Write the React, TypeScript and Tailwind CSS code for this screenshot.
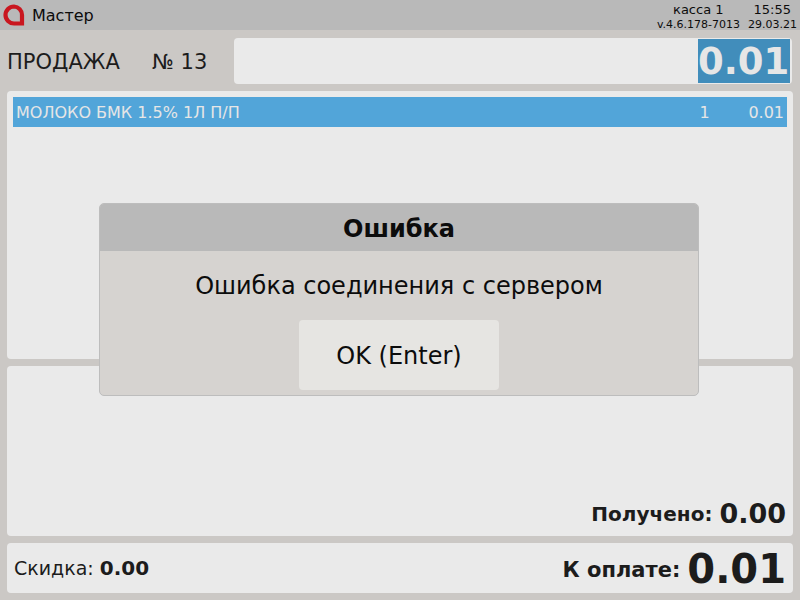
const FONT = "font-['DejaVu_Sans',sans-serif]"

function Logo() {
  return (
    <svg width="22" height="22" viewBox="0 0 22 22" className="shrink-0">
      <path
        d="M11 2.5 A8.5 8.5 0 0 0 11 19.5 H19 V11 A8.5 8.5 0 0 0 11 2.5 Z"
        fill="none"
        stroke="#c9161f"
        strokeWidth="4.2"
      />
    </svg>
  )
}

export default function App() {
  return (
    <div className={`${FONT} relative w-[800px] h-[600px] overflow-hidden bg-[#cbc8c5] text-[#1c1c1c]`}>
      {/* Top bar */}
      <div className="h-[30px] bg-[#b9b9b9] flex items-center justify-between pl-[3px] pr-[3px]">
        <div className="flex items-center gap-[7px]">
          <Logo />
          <span className="text-[16px] leading-[18px] pt-[2px] text-[#0c0c0c]">Мастер</span>
        </div>
        <div className="flex flex-col items-end text-[#0c0c0c] pt-[2px]">
          <div className="flex text-[13px] leading-[16px] pr-[6px]">
            <span className="ml-[1px]">касса 1</span>
            <span className="ml-[30px]">15:55</span>
          </div>
          <div className="flex text-[11px] leading-[12px] pt-[1px]">
            <span>v.4.6.178-7013</span>
            <span className="ml-[8px]">29.03.21</span>
          </div>
        </div>
      </div>

      {/* Sale header */}
      <div className="flex items-center h-[46px] mt-[8px] pl-[7px] pr-[8px]">
        <span className="w-[145px] text-[21px] leading-[24px] pt-[2px]">ПРОДАЖА</span>
        <span className="w-[82px] text-[21px] leading-[24px] pt-[2px]">№ 13</span>
        <div className="flex-1 h-full bg-[#eaeaea] rounded-[4px] flex justify-end items-center pr-[2px]">
          <div className="w-[92px] h-[44px] bg-[#418dbb] text-[#e6e6e6] text-[37px] font-bold leading-[45px] text-right pr-[1px]">
            0.01
          </div>
        </div>
      </div>

      {/* Items */}
      <div className="h-[268px] mt-[7px] mx-[7px] bg-[#eaeaea] rounded-[4px] p-[6px]">
        <div className="h-[30px] bg-[#52a5d9] text-[#e6e6e6] text-[16px] leading-[31px] flex pl-[3px] pr-[3px]">
          <span className="flex-1">МОЛОКО БМК 1.5% 1Л П/П</span>
          <span className="w-[10px] mr-[39px]">1</span>
          <span>0.01</span>
        </div>
      </div>

      {/* Received */}
      <div className="h-[170px] mt-[7px] mx-[7px] bg-[#eaeaea] rounded-[4px] flex items-end justify-end pr-[7px] pb-[5px]">
        <span className="text-[20px] font-bold leading-[34px] mr-[7px]">Получено:</span>
        <span className="text-[27px] font-bold leading-[34px]">0.00</span>
      </div>

      {/* Total */}
      <div className="h-[50px] mt-[7px] mx-[7px] bg-[#eaeaea] rounded-[4px] flex items-center pl-[7px] pr-[7px]">
        <span className="text-[19px] leading-none">Скидка:</span>
        <span className="text-[20px] font-bold leading-none ml-[6px] flex-1">0.00</span>
        <span className="text-[21px] font-bold leading-[24px] pt-[3px] mr-[7px]">К оплате:</span>
        <span className="text-[40px] font-bold leading-[44px] pt-[2px]">0.01</span>
      </div>

      {/* Error dialog */}
      <div className="absolute left-[99px] top-[203px] w-[600px] h-[193px] rounded-[5px] border border-[#bdbdbd] bg-[#d6d3d0] overflow-hidden text-[#0c0c0c]">
        <div className="h-[47px] bg-[#b9b9b9] text-[24px] font-bold leading-[50px] text-center">
          Ошибка
        </div>
        <div className="text-[24px] leading-[28px] text-center mt-[21px]">
          Ошибка соединения с сервером
        </div>
        <button className="block mx-auto mt-[20px] w-[200px] h-[70px] rounded-[4px] bg-[#e6e5e2] text-[24px] pt-[2px]">
          OK (Enter)
        </button>
      </div>
    </div>
  )
}
